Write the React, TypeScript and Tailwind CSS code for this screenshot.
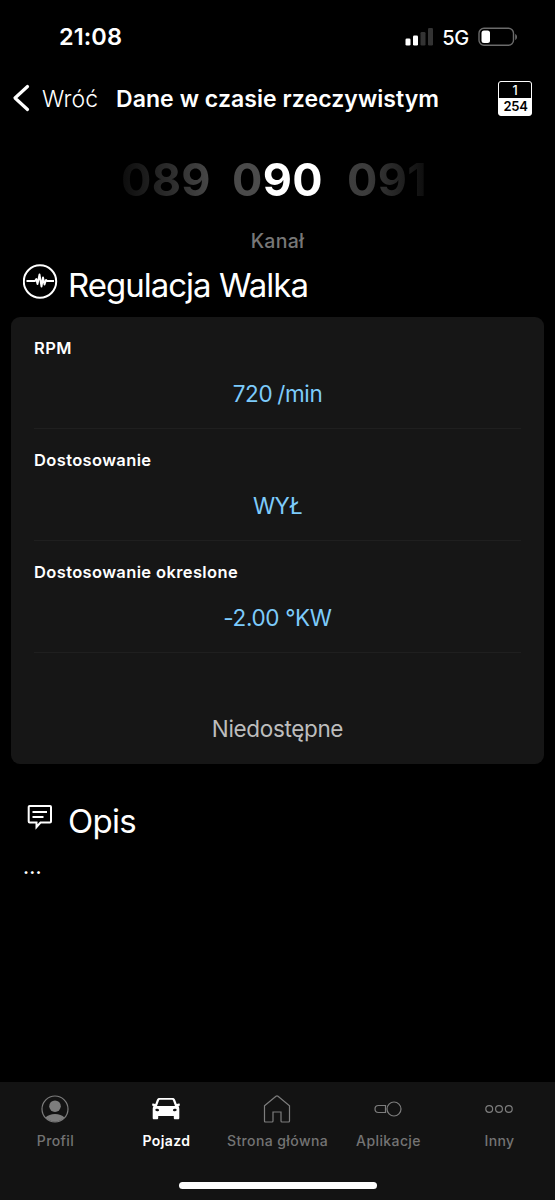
const ROWS = [
  { label: "RPM", value: "720 /min", valueSpacing: "tracking-[-0.35px] [word-spacing:-1px]" },
  { label: "Dostosowanie", value: "WYŁ", valueSpacing: "tracking-[-0.6px]" },
  { label: "Dostosowanie okreslone", value: "-2.00 °KW", valueSpacing: "tracking-[-0.35px]" },
];

const StatusBar = () => (
  <div className="flex h-[74px] items-center pl-[59px] pr-[37px]">
    <span className="text-[23.5px] font-semibold leading-none tracking-[0.1px]">21:08</span>
    <div className="ml-auto flex items-center">
      <svg width="28" height="18" viewBox="0 0 28 18" className="mr-[9px]">
        <rect x="0.5" y="10.5" width="5" height="7" rx="1.3" fill="#fff" />
        <rect x="8" y="7.5" width="5" height="10" rx="1.3" fill="#fff" />
        <rect x="15.5" y="4" width="5" height="13.5" rx="1.3" fill="#333" />
        <rect x="23" y="0" width="5" height="17.5" rx="1.3" fill="#333" />
      </svg>
      <span className="mr-[9px] mt-[1px] text-[20px] font-medium leading-none tracking-[-0.3px]">5G</span>
      <svg width="40" height="20" viewBox="0 0 40 20">
        <rect x="1" y="1.3" width="34.5" height="17" rx="5" fill="none" stroke="#6b6b6b" strokeWidth="1.4" />
        <rect x="3.5" y="3.5" width="8.5" height="12.5" rx="2.5" fill="#fff" />
        <path d="M37.2 7v6c2.4-1 2.4-5 0-6z" fill="#6b6b6b" />
      </svg>
    </div>
  </div>
);

const Header = () => (
  <div className="flex h-[48px] items-center pl-[12px] pr-[23px]">
    <svg width="18" height="28" viewBox="0 0 18 28" fill="none" stroke="#fff" strokeWidth="3.2">
      <path d="M15.5 2.5 3 14l12.5 11.5" strokeLinecap="round" strokeLinejoin="round" />
    </svg>
    <span className="ml-[12px] mt-[2px] w-[74px] text-[23px] font-light leading-none tracking-[0.1px]">Wróć</span>
    <h1 className="mt-[2px] text-[23px] font-semibold leading-none tracking-[0.07px]">Dane w czasie rzeczywistym</h1>
    <div className="ml-auto h-[35px] w-[34px] overflow-hidden rounded-[3px] border border-white bg-white text-center">
      <div className="h-[16px] bg-black text-[12.5px] font-medium leading-[18px]">1</div>
      <div className="pl-[1px] text-[13px] font-semibold leading-[16px] tracking-[-0.3px] text-black">254</div>
    </div>
  </div>
);

const Channel = () => (
  <div className="flex h-[133px] flex-col items-center">
    <div className="ml-[121px] mt-[30px] flex w-[306px] self-start overflow-hidden bg-[linear-gradient(90deg,#0c0c0c_0px,#484848_91px,#4c4c4c_140px,#fff_141px,#fff_203px,#404040_205px,#3c3c3c_246px,#0c0c0c_306px)] bg-clip-text text-[45px] font-bold leading-[56px] tracking-[0.3px] text-transparent">
      <span className="w-[111px] shrink-0">089</span>
      <span className="w-[115px] shrink-0">090</span>
      <span className="shrink-0">091</span>
    </div>
    <span className="mt-[21px] text-[19.5px] font-medium leading-[24px] tracking-[0.3px] text-[#777]">Kanał</span>
  </div>
);

const PulseIcon = () => (
  <svg width="35" height="35" viewBox="0 0 35 35" fill="none" stroke="#fff" strokeLinejoin="round">
    <circle cx="17" cy="17.5" r="16.2" strokeWidth="2" />
    <path d="M3.5 17h8.5l1.3-2 1.2 5 2-9.5 2 12 1.5-9 1.5 7 1.5-4.5 1.2 1H31" strokeWidth="1.9" />
  </svg>
);

const NoteIcon = () => (
  <svg width="26" height="26" viewBox="0 0 26 26" fill="none" stroke="#fff" strokeWidth="2">
    <path d="M2.7 2h20.3a1 1 0 0 1 1 1V17.5a1 1 0 0 1-1 1H13.5L9.5 23V18.5H2.7a1 1 0 0 1-1-1V3a1 1 0 0 1 1-1z" />
    <path d="M5.5 8h14.5M5.5 13h11" />
  </svg>
);

const ICONS = {
  profile: (
    <svg width="28" height="28" viewBox="0 0 28 28">
      <circle cx="14" cy="14" r="13" fill="none" stroke="#7d7d7d" strokeWidth="1.2" />
      <circle cx="14" cy="11.2" r="5.8" fill="#7d7d7d" />
      <path d="M4.5 22.5c4-4.7 15-4.7 19 0A13 13 0 0 1 4.5 22.5z" fill="#7d7d7d" />
    </svg>
  ),
  car: (
    <svg width="28" height="28" viewBox="0 0 28 28">
      <path fill="#fff" fillRule="evenodd" d="M8 3h12c2 0 2.7.6 3.3 2.2l1.4 3.7 2.2-.4c.7 0 1 .4.9 1l-.3 1.5-1 .3c.6.9.8 1.7.8 2.7v9c0 .9-.4 1.3-1.3 1.3h-2.9c-.9 0-1.3-.4-1.3-1.3v-2H6.200v2c0 .9-.4 1.3-1.3 1.3H2c-.9 0-1.3-.4-1.3-1.3v-9c0-1 .2-1.8.8-2.700l-1-.3-.3-1.5c-.1-.6.2-1 .9-1l2.2.4 1.4-3.700C5.300 3.600 6 3 8 3zM8.200 4.800c-.8 0-1 .3-1.3 1L5 11h18l-1.900-5.200c-.3-.7-.5-1-1.300-1z" />
      <ellipse cx="5.2" cy="15" rx="1.9" ry="1.2" fill="#131313" transform="rotate(8 5.2 15)" />
      <ellipse cx="22.8" cy="15" rx="1.9" ry="1.2" fill="#131313" transform="rotate(-8 22.8 15)" />
    </svg>
  ),
  home: (
    <svg width="28" height="28" viewBox="0 0 28 28" fill="none" stroke="#7d7d7d" strokeWidth="1.2">
      <path d="M1.5 10.7 13 1.2q1-.8 2 0l11.5 9.5V26q0 1-1 1H19q-1 0-1-1v-9h-8v9q0 1-1 1H2.5q-1 0-1-1z" />
    </svg>
  ),
  apps: (
    <svg width="28" height="28" viewBox="0 0 28 28" fill="none" stroke="#7d7d7d" strokeWidth="1.2">
      <path d="M11.5 10.5H4.5a3.5 3.5 0 0 0 0 7h7z" />
      <circle cx="20" cy="14" r="7" />
    </svg>
  ),
  more: (
    <svg width="28" height="28" viewBox="0 0 28 28" fill="none" stroke="#7d7d7d" strokeWidth="1.2">
      <circle cx="4.2" cy="14" r="3.4" />
      <circle cx="14" cy="14" r="3.4" />
      <circle cx="23.8" cy="14" r="3.4" />
    </svg>
  ),
};

const TABS = [
  { icon: ICONS.profile, label: "Profil", color: "text-[#747474]" },
  { icon: ICONS.car, label: "Pojazd", color: "text-white font-semibold" },
  { icon: ICONS.home, label: "Strona główna", color: "text-[#747474]" },
  { icon: ICONS.apps, label: "Aplikacje", color: "text-[#747474]" },
  { icon: ICONS.more, label: "Inny", color: "text-[#747474]" },
];

export default function App() {
  return (
    <div className="flex h-[1200px] w-[555px] flex-col overflow-hidden whitespace-nowrap bg-black font-['Inter',sans-serif] text-white">
      <StatusBar />
      <Header />
      <Channel />

      {/* Measured values */}
      <div className="flex h-[62px] items-start pl-[23px] pt-[9px]">
        <PulseIcon />
        <h2 className="ml-[10px] mt-[1px] text-[33px] font-normal leading-[40px] tracking-[-1px]">Regulacja Walka</h2>
      </div>
      <div className="mx-[11px] h-[447px] rounded-[9px] bg-[#161616] px-[23px]">
        {ROWS.map((row) => (
          <div key={row.label} className="h-[112px] border-b border-[#1f1f1f] pt-[21px]">
            <div className="text-[16.5px] font-semibold leading-[20px] tracking-[0.37px]">{row.label}</div>
            <div className={`mt-[22px] text-center text-[22.5px] leading-[28px] text-[#7dcbfb] ${row.valueSpacing}`}>{row.value}</div>
          </div>
        ))}
        <div className="pt-[62px] text-center text-[22.5px] leading-[28px] tracking-[-0.35px] text-[#bdbdbd]">Niedostępne</div>
      </div>

      {/* Description */}
      <div className="flex pl-[27px] pt-[37px]">
        <div className="mt-[3px]">
          <NoteIcon />
        </div>
        <h2 className="ml-[15px] text-[33px] font-normal leading-[40px] tracking-[-0.7px]">Opis</h2>
      </div>
      <div className="mt-[14px] pl-[23px] text-[20px] font-medium leading-[24px] tracking-[0.2px]">...</div>

      <div className="mt-auto h-[118px] bg-[#131313] pt-[13px]">
        <div className="grid grid-cols-5">
          {TABS.map((tab) => (
            <div key={tab.label} className={`flex flex-col items-center text-[14px] font-medium ${tab.color}`}>
              <div className="pr-[1px]">{tab.icon}</div>
              <span className="mt-[9px] leading-[18px] tracking-[0.4px]">{tab.label}</span>
            </div>
          ))}
        </div>
        <div className="mx-auto mt-[32px] h-[7px] w-[198px] rounded-full bg-white" />
      </div>
    </div>
  );
}
